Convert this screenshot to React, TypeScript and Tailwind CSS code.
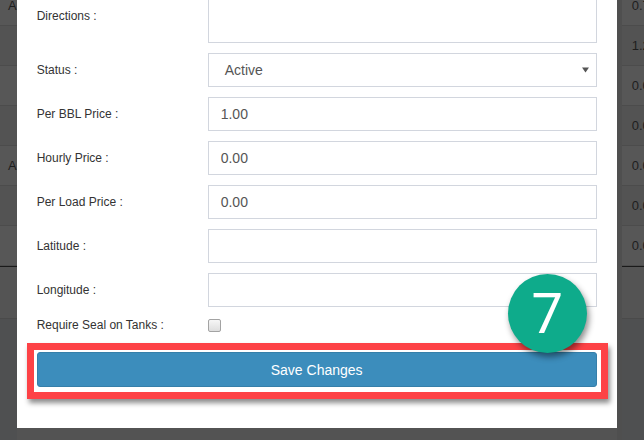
import React from 'react';

type Field = { label: string; value?: string };

const fields: Field[] = [
  { label: 'Per BBL Price :', value: '1.00' },
  { label: 'Hourly Price :', value: '0.00' },
  { label: 'Per Load Price :', value: '0.00' },
  { label: 'Latitude :' },
  { label: 'Longitude :' },
];

const leftRows = ['A', '', '', '', 'A', '', ''];
const rightRows = ['0.7', '1.2', '0.0', '0.0', '0.0', '0.0', '0.0'];

const Backdrop = ({ rows, right }: { rows: string[]; right?: boolean }) => {
  return (
    <div className={`h-[440px] flex flex-col ${right ? 'flex-1 border-l-[5px] border-[#4f4f4f]' : 'w-[17px]'}`}>
      <div className="-mt-[14px] flex flex-col">
        {rows.map((r, i) => (
          <div
            key={i}
            className={`h-[40px] shrink-0 flex items-center border-b border-[#4c4c4c] text-[13px] text-[#1e1e1e] ${right ? 'pl-[10px]' : 'pl-[8px]'} ${i % 2 === 0 ? 'bg-[#575757]' : 'bg-[#535353]'}`}
          >
            {r}
          </div>
        ))}
      </div>
      <div className="h-[1px] bg-[#1a1a1a]" />
      <div className="h-[52px] bg-[#545454] border-b border-[#4a4a4a]" />
      <div className="flex-1 bg-[#4f5051]" />
    </div>
  );
};

const Row = ({ label, children }: { label: string; children: React.ReactNode }) => (
  <div className="flex items-center">
    <div className="w-[171px] shrink-0 text-[12px] text-[#333]">{label}</div>
    <div className="flex-1">{children}</div>
  </div>
);

const App = () => {
  return (
    <div className="w-[644px] h-[440px] overflow-hidden bg-[#535353] flex items-start font-['Liberation_Sans',Arial,sans-serif]">
      <Backdrop rows={leftRows} />

      <div className="relative w-[600px] h-[428px] shrink-0 bg-white pl-[20px] pr-[20px]">
        <div className="-mt-[1px] flex items-start">
          <div className="w-[171px] shrink-0 text-[12px] text-[#333] leading-[34px]">Directions :</div>
          <div className="flex-1 h-[44px] border border-[#d2d6de]" />
        </div>

        <div className="mt-[10px]">
          <Row label="Status :">
            <div className="h-[34px] border border-[#d2d6de] flex items-center justify-between pl-[16px] pr-[7px] text-[14px] text-[#555]">
              <span>Active</span>
              <svg width="7" height="6" viewBox="0 0 7 6">
                <path d="M0 0.5 L7 0.5 L3.5 5.5 Z" fill="#555" />
              </svg>
            </div>
          </Row>
        </div>

        {fields.map((f) => (
          <div key={f.label} className="mt-[10px]">
            <Row label={f.label}>
              <div className="h-[34px] border border-[#d2d6de] flex items-center pl-[12px] text-[14px] text-[#555]">
                {f.value}
              </div>
            </Row>
          </div>
        ))}

        <div className="mt-[8px] h-[20px] flex items-center">
          <div className="w-[171px] shrink-0 text-[12px] text-[#333]">Require Seal on Tanks :</div>
          <div className="w-[13px] h-[13px] rounded-[2px] border border-[#a3a3a3] bg-gradient-to-b from-[#f6f6f6] to-[#dedede]" />
        </div>

        <button className="mt-[17px] w-full h-[35px] rounded-[3px] bg-[#3c8dbc] border border-[#367fa9] text-white text-[14px] leading-none">
          Save Changes
        </button>

        <div className="absolute left-[10px] top-[343px] w-[581px] h-[56px] border-[7px] border-[#fd4246] shadow-[2px_4px_5px_rgba(0,0,0,0.45)]" />

        <div className="absolute left-[491px] top-[274px] w-[79px] h-[79px] rounded-full bg-[#0eab8b] shadow-[2px_4px_6px_rgba(0,0,0,0.45)] flex items-center justify-center text-white text-[56px] leading-none font-['Roboto',Arial,sans-serif]">
          7
        </div>
      </div>

      <Backdrop rows={rightRows} right />
    </div>
  );
};

export default App;
